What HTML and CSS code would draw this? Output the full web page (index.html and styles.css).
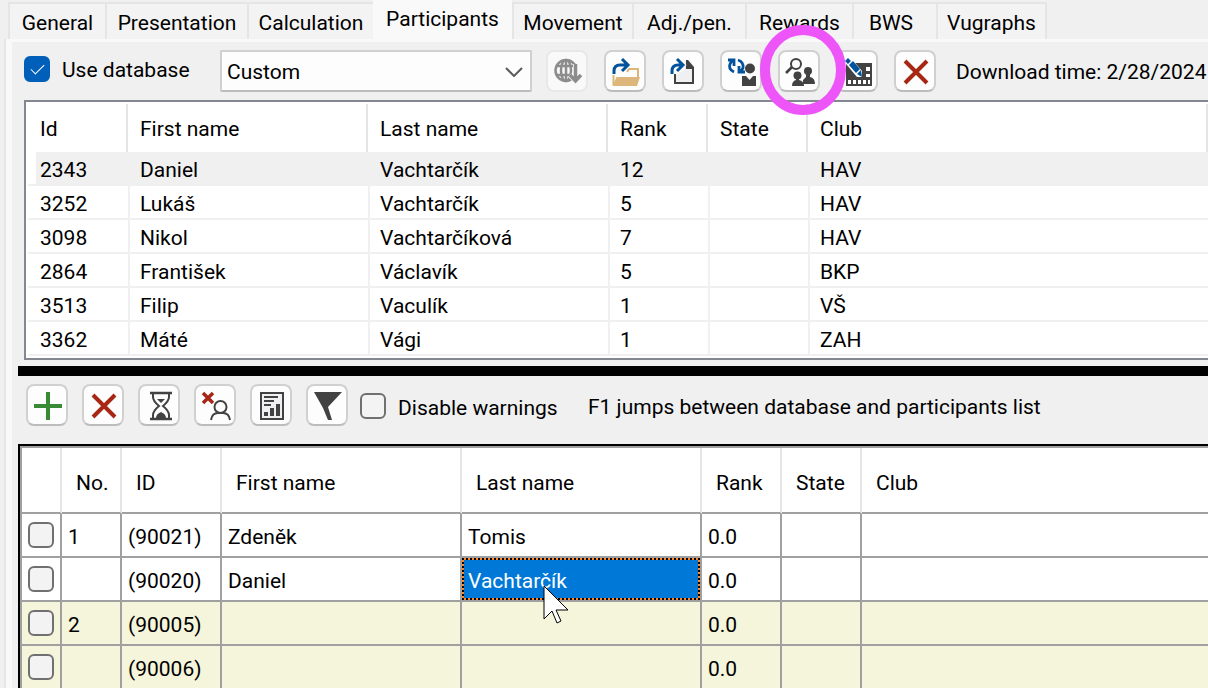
FILE: index.html
```html
<!DOCTYPE html>
<html lang="en">
<head>
<meta charset="utf-8">
<title>Participants</title>
<link rel="stylesheet" href="styles.css">
</head>
<body>
<div class="window">
  <nav class="tabs" role="tablist">
    <button class="tab w-general" role="tab">General</button>
    <button class="tab w-presentation" role="tab">Presentation</button>
    <button class="tab w-calculation" role="tab">Calculation</button>
    <button class="tab active" role="tab" aria-selected="true">Participants</button>
    <button class="tab w-movement" role="tab">Movement</button>
    <button class="tab w-adj" role="tab">Adj./pen.</button>
    <button class="tab w-rewards" role="tab">Rewards</button>
    <button class="tab w-bws" role="tab">BWS</button>
    <button class="tab w-vugraphs" role="tab">Vugraphs</button>
  </nav>
  <main class="page">
    <div class="toolbar database-bar">
      <label class="check use-db"><input type="checkbox" checked><span>Use database</span></label>
      <div class="combo">
        <select aria-label="Database"><option>Custom</option></select>
        <svg class="chevron" viewBox="0 0 18 10"><path d="M1 1l8 8 8-8"/></svg>
      </div>
      <div class="buttons wide">
        <button class="tool" aria-label="Download" disabled>
          <svg viewBox="2 2 38 38" fill="none" stroke="#8c8c8c" stroke-width="2.500"><circle cx="20" cy="20.500" r="10.500"/><ellipse cx="20" cy="20.500" rx="5" ry="10.500"/><path d="M20 10v21M10 16h19M10 25h15"/><path d="M29.500 14v16M24 25l5.500 6 5.500-6" stroke="#f9f9f9" stroke-width="5"/><path d="M29.500 14v16M24 25l5.500 6 5.500-6" stroke-width="3.500"/></svg>
        </button>
        <button class="tool" aria-label="Open database">
          <svg viewBox="2 2 38 38" fill="none"><path d="M9.500 25v10M23 22l2-3h9v9" stroke="#dcb67a" stroke-width="2"/><path d="M12.500 27H36l-3 9H8.500z" fill="#dcb67a"/><path d="M10 24v-3q0-6 6-6h7M18 9l6 6-6 6" stroke="#00539c" stroke-width="3"/></svg>
        </button>
        <button class="tool" aria-label="Import file">
          <svg viewBox="2 2 38 38" fill="none"><path d="M13 25v8h18V17l-6-6h-2v9l-6 3z" fill="#f0eff1"/><path d="M13 24v9h18V17" stroke="#424242" stroke-width="2"/><path d="M24 10h2l6 7v2h-8z" fill="#424242"/><path d="M10 24v-3q0-6 6-6h5M15 9l6 6-6 6" stroke="#fff" stroke-width="5"/><path d="M10 24v-3q0-6 6-6h5M15 9l6 6-6 6" stroke="#00539c" stroke-width="3"/></svg>
        </button>
        <button class="tool" aria-label="Synchronize participants">
          <svg viewBox="2 2 38 38" fill="none"><path d="M14 22q-6-3-4-8 1-3 4-4M8 10h6v6M18 10q6 2 5 8-1 3-4 4M25 22h-6v-6" stroke="#00539c" stroke-width="2.800"/><circle cx="30" cy="18.500" r="5" fill="#424242"/><path d="M22 26h4l3.500 4 3.500-4h3v10H22z" fill="#424242"/></svg>
        </button>
        <span class="marked">
          <button class="tool" aria-label="Find participants">
            <svg viewBox="2 2 38 38" fill="#424242"><circle cx="18" cy="14" r="5" fill="none" stroke="#424242" stroke-width="2"/><path d="M14 17l-6 6" stroke="#424242" stroke-width="2.600"/><circle cx="30" cy="21" r="4"/><path d="M28 24h4v3q5 1 5 7H25v-4l3-3z"/><circle cx="19.500" cy="25.500" r="4"/><path d="M18 28h3v2q5 1 5 6H14q0-5 4-6z"/></svg>
          </button>
          <svg class="ring" viewBox="0 0 86 90"><ellipse cx="43" cy="45" rx="38" ry="40"/></svg>
        </span>
        <button class="tool" aria-label="Edit columns">
          <svg viewBox="2 2 38 38"><path d="M10 13h26v23H10z" fill="#424242"/><path d="M12 30h3v4h-3zM17 30h3v4h-3zM22 30h3v4h-3zM27 30h3v4h-3zM32 30h2v4h-2zM30 17h4v4h-4zM30 24h4v3h-4z" fill="#fff"/><path d="M10 11l5-3 11 13v6h-5L10 14z" fill="#fff"/><path d="M9 11l3-3 3 3-3 3zM13 15l4-4 7 8-4 4zM21 24l4-4 1 7z" fill="#00539c"/></svg>
        </button>
        <button class="tool" aria-label="Clear database">
          <svg viewBox="2 2 38 38"><path d="M11 11l22 22M33 11L11 33" stroke="#a82714" stroke-width="4"/></svg>
        </button>
      </div>
      <span class="download">Download time: 2/28/2024</span>
    </div>

    <div class="list">
      <table class="db">
        <colgroup><col class="c-edge"><col class="c-id"><col class="c-name"><col class="c-name"><col class="c-small"><col class="c-small"><col></colgroup>
        <thead><tr><th></th><th>Id</th><th>First name</th><th>Last name</th><th>Rank</th><th>State</th><th>Club</th></tr></thead>
        <tbody>
          <tr class="current"><td></td><td>2343</td><td>Daniel</td><td>Vachtarčík</td><td>12</td><td></td><td>HAV</td></tr>
          <tr><td></td><td>3252</td><td>Lukáš</td><td>Vachtarčík</td><td>5</td><td></td><td>HAV</td></tr>
          <tr><td></td><td>3098</td><td>Nikol</td><td>Vachtarčíková</td><td>7</td><td></td><td>HAV</td></tr>
          <tr><td></td><td>2864</td><td>František</td><td>Václavík</td><td>5</td><td></td><td>BKP</td></tr>
          <tr><td></td><td>3513</td><td>Filip</td><td>Vaculík</td><td>1</td><td></td><td>VŠ</td></tr>
          <tr><td></td><td>3362</td><td>Máté</td><td>Vági</td><td>1</td><td></td><td>ZAH</td></tr>
        </tbody>
      </table>
    </div>

    <div class="splitter"></div>

    <div class="toolbar entry-bar">
      <div class="buttons">
        <button class="tool" aria-label="Add">
          <svg viewBox="2 2 38 38"><path d="M22 8v28M8 22h28" stroke="#388a34" stroke-width="4"/></svg>
        </button>
        <button class="tool" aria-label="Delete">
          <svg viewBox="2 2 38 38"><path d="M11 11l22 22M33 11L11 33" stroke="#a82714" stroke-width="4"/></svg>
        </button>
        <button class="tool" aria-label="Waiting list">
          <svg viewBox="2 2 38 38" fill="none" stroke="#424242" stroke-width="2"><path d="M12 9h22M12 35h22" stroke-width="2.600"/><path d="M15 9v4q0 4 6 9-6 5-6 9v4M31 9v4q0 4-6 9 6 5 6 9v4"/><path d="M19 15h8l-4 4zM18 34q0-4 5-6 5 2 5 6z" fill="#424242" stroke="none"/></svg>
        </button>
        <button class="tool" aria-label="Remove participant">
          <svg viewBox="2 2 38 38" fill="none" stroke="#424242" stroke-width="2"><circle cx="26.500" cy="23" r="6"/><path d="M17 36q1-7 7-7h5q6 0 7 7"/><path d="M9 9l10 10M19 9L9 19" stroke="#a82714" stroke-width="3.500"/></svg>
        </button>
        <button class="tool" aria-label="Report">
          <svg viewBox="2 2 38 38"><path d="M11 9h22v26H11z" fill="#f0eff1" stroke="#424242" stroke-width="2"/><path d="M14 13h14M14 17h10M14 21h7" stroke="#424242" stroke-width="2"/><path d="M14 28h4v4h-4zM20 24h4v8h-4zM26 20h4v12h-4z" fill="#424242"/></svg>
        </button>
        <button class="tool" aria-label="Filter">
          <svg viewBox="2 2 38 38"><path d="M8 8h28L22 23l4 13h-4l-5-12z" fill="#424242"/></svg>
        </button>
      </div>
      <label class="check warnings"><input type="checkbox"><span>Disable warnings</span></label>
      <span class="hint">F1 jumps between database and participants list</span>
    </div>

    <div class="sheet">
      <table class="grid">
        <colgroup><col class="g-check"><col class="g-no"><col class="g-id"><col class="g-name"><col class="g-name"><col class="g-small"><col class="g-small"><col></colgroup>
        <thead><tr><th></th><th>No.</th><th>ID</th><th>First name</th><th>Last name</th><th>Rank</th><th>State</th><th>Club</th></tr></thead>
        <tbody>
          <tr><td class="pick"><input type="checkbox" aria-label="Select 90021"></td><td>1</td><td>(90021)</td><td>Zdeněk</td><td>Tomis</td><td>0.0</td><td></td><td></td></tr>
          <tr><td class="pick"><input type="checkbox" aria-label="Select 90020"></td><td></td><td>(90020)</td><td>Daniel</td><td class="focused">Vachtarčík<svg class="pointer" viewBox="0 0 26 40"><path d="M1 1v33l8-8 5 12 4-2-5-11h12z"/></svg></td><td>0.0</td><td></td><td></td></tr>
          <tr class="vacant"><td class="pick"><input type="checkbox" aria-label="Select 90005"></td><td>2</td><td>(90005)</td><td></td><td></td><td>0.0</td><td></td><td></td></tr>
          <tr class="vacant"><td class="pick"><input type="checkbox" aria-label="Select 90006"></td><td></td><td>(90006)</td><td></td><td></td><td>0.0</td><td></td><td></td></tr>
        </tbody>
      </table>
    </div>
  </main>
</div>
</body>
</html>
```
FILE: styles.css
```css
* { box-sizing: border-box; }

body {
  margin: 0;
  background: #f0f0f0;
  color: #000;
  font: 21px/26px Roboto, "Liberation Sans", sans-serif;
}

button, select, input { font: inherit; color: inherit; margin: 0; }

.window {
  display: flex;
  flex-direction: column;
  height: 100vh;
  overflow: hidden;
  padding-left: 4px;
  white-space: nowrap;
}

.tabs {
  display: flex;
  align-items: flex-end;
  height: 39px;
  flex: none;
  padding-left: 4px;
}
.tab {
  height: 37px;
  padding: 2px 0 0;
  border: 2px solid #e5e5e5;
  border-right-width: 0;
  border-bottom-width: 0;
  background: #f3f3f3;
}
.tab:last-child { border-right-width: 2px; }
.tab.active {
  width: 139px;
  height: 39px;
  padding: 0 0 2px;
  border-width: 0;
  background: #f9f9f9;
}
.w-general { width: 97px; }
.w-presentation { width: 142px; }
.w-calculation { width: 126px; }
.w-movement { width: 120px; }
.w-adj { width: 113px; }
.w-rewards { width: 107px; }
.w-bws { width: 84px; padding-right: 8px; }
.w-vugraphs { width: 111px; }

.page {
  display: flex;
  flex-direction: column;
  flex: 1;
  min-height: 0;
  border-left: 2px solid #e5e5e5;
  box-shadow: inset 6px 3px #f9f9f9;
  padding: 11px 0 0 12px;
}

.toolbar { display: flex; align-items: center; height: 42px; flex: none; }
.database-bar { padding-left: 6px; margin-bottom: 8px; }
.entry-bar { padding-left: 8px; margin: 8px 0 18px; }

.check { display: flex; align-items: center; gap: 12px; flex: none; }
.use-db { width: 196px; padding-bottom: 4px; }
.use-db span { padding-top: 2px; }
.warnings { width: 228px; margin-left: 12px; padding-top: 2px; }
.warnings span, .hint { padding-top: 4px; }
.check input, .pick input {
  appearance: none;
  width: 26px;
  height: 26px;
  flex: none;
  border: 2px solid #707070;
  border-radius: 6px;
  background: #f3f3f3;
}
.check input:checked {
  border-color: #005fb8;
  background: #005fb8;
  display: grid;
  place-items: center;
}
.check input:checked::after {
  content: "";
  width: 12px;
  height: 6px;
  margin-bottom: 4px;
  border: solid #fff;
  border-width: 0 0 1px 1px;
  transform: rotate(-45deg);
}

.combo { position: relative; width: 312px; height: 42px; flex: none; }
.combo select {
  appearance: none;
  width: 100%;
  height: 100%;
  padding: 2px 5px 0;
  border: 2px solid #d0d0d0;
  border-bottom-color: #bcbcbc;
  border-radius: 2px;
  background: #fdfdfd;
}
.chevron {
  position: absolute;
  right: 9px;
  top: 17px;
  width: 18px;
  height: 10px;
  fill: none;
  stroke: #5a5a5a;
  stroke-width: 2;
  pointer-events: none;
}

.buttons { display: flex; gap: 14px; flex: none; }
.buttons.wide { gap: 16px; margin-left: 14px; }
.tool {
  display: block;
  width: 42px;
  height: 42px;
  padding: 0;
  border: 2px solid #d0d0d0;
  border-bottom-color: #bcbcbc;
  border-radius: 8px;
  background: #fdfdfd;
}
.tool:disabled { border-color: #e8e8e8; background: #f9f9f9; }
.tool svg { display: block; width: 38px; height: 38px; }
.marked { position: relative; }
.ring {
  position: absolute;
  z-index: 1;
  left: -18px;
  top: -25px;
  width: 86px;
  height: 90px;
  fill: none;
  stroke: #ee55f8;
  stroke-width: 10;
  pointer-events: none;
}
.download { margin-left: 20px; padding-top: 2px; }

.list {
  flex: none;
  margin-left: 6px;
  padding: 2px 0 2px 2px;
  border: 2px solid #828790;
  border-right: 0;
  background: #fff;
}
table { width: 100%; table-layout: fixed; border-collapse: separate; border-spacing: 0; }
th { font-weight: normal; text-align: left; }
th, td { padding: 0; }

.c-edge { width: 8px; }
.c-id { width: 92px; }
.c-name { width: 240px; }
.c-small { width: 100px; }
.db th { height: 48px; position: relative; padding: 2px 0 0 12px; }
.db td { height: 34px; padding: 4px 0 0 10px; border-bottom: 2px solid #f0f0f0; }
.db th:nth-child(-n+2), .db td:nth-child(-n+2) { padding-left: 4px; }
.db th:nth-child(n+3)::before {
  content: "";
  position: absolute;
  left: -2px;
  top: 0;
  width: 2px;
  height: 100%;
  background: #e5e5e5;
}
.db th:last-child { border-right: 2px solid #e5e5e5; }
.db td:nth-child(n+3) { border-left: 2px solid #f0f0f0; }
.db .current td:nth-child(n+2) { background: #f0f0f0; }

.splitter { height: 10px; flex: none; margin-top: 6px; background: #000; }

.sheet {
  flex: 1;
  min-height: 0;
  overflow: hidden;
  border: solid #000;
  border-width: 2px 0 0 2px;
  background: #ababab;
}
.grid { border: solid #a0a0a0; border-width: 2px 0 0 2px; }
.g-check { width: 40px; }
.g-no { width: 60px; }
.g-id { width: 100px; }
.g-name { width: 240px; }
.g-small { width: 80px; }
.grid th {
  height: 66px;
  padding: 6px 0 0 14px;
  border-bottom: 2px solid #a0a0a0;
  border-right: 2px solid #e5e5e5;
  background: #fff;
}
.grid td {
  height: 44px;
  padding: 4px 0 0 6px;
  border-right: 2px solid #a0a0a0;
  border-bottom: 2px solid #a0a0a0;
  background: #fff;
}
.grid th:last-child, .grid td:last-child { border-right: 0; }
.grid td.pick { padding-top: 0; }
.grid .vacant td { background: #f5f5dc; }
.pick input { display: block; }
.grid .focused {
  position: relative;
  color: #fff;
  background:
    repeating-linear-gradient(90deg, #000 0 2px, #ff8728 2px 4px) 0 0 / 100% 2px no-repeat,
    repeating-linear-gradient(90deg, #000 0 2px, #ff8728 2px 4px) 0 100% / 100% 2px no-repeat,
    repeating-linear-gradient(#000 0 2px, #ff8728 2px 4px) 0 0 / 2px 100% no-repeat,
    repeating-linear-gradient(#000 0 2px, #ff8728 2px 4px) 100% 0 / 2px 100% no-repeat,
    #0078d7;
  background-clip: padding-box;
  background-origin: padding-box;
}
.pointer {
  position: absolute;
  z-index: 1;
  left: 81px;
  top: 27px;
  width: 26px;
  height: 40px;
  fill: #fff;
  stroke: #000;
  stroke-width: 1;
}
```
